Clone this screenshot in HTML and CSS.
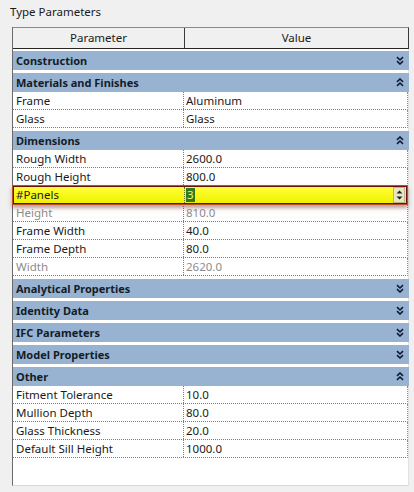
FILE: index.html
```html
<!DOCTYPE html>
<html>
<head>
<meta charset="utf-8">
<link rel="stylesheet" href="styles.css">
</head>
<body>
<div class="panel">
  <div class="title">Type Parameters</div>
  <div class="grid">
    <div class="head"><div class="hc">Parameter</div><div class="hc">Value</div></div>

    <div class="group first"><span>Construction</span><svg class="chev" width="8" height="9" viewBox="0 0 8 9"><path d="M1 1.2 L4 4 L7 1.2 M1 5.2 L4 8 L7 5.2"/></svg></div>

    <div class="group"><span>Materials and Finishes</span><svg class="chev" width="8" height="9" viewBox="0 0 8 9"><path d="M1 3.8 L4 1 L7 3.8 M1 7.8 L4 5 L7 7.8"/></svg></div>
    <div class="row"><div class="p">Frame</div><div class="v">Aluminum</div></div>
    <div class="row"><div class="p">Glass</div><div class="v">Glass</div></div>

    <div class="group"><span>Dimensions</span><svg class="chev" width="8" height="9" viewBox="0 0 8 9"><path d="M1 3.8 L4 1 L7 3.8 M1 7.8 L4 5 L7 7.8"/></svg></div>
    <div class="row"><div class="p">Rough Width</div><div class="v">2600.0</div></div>
    <div class="row"><div class="p">Rough Height</div><div class="v">800.0</div></div>
    <div class="row sel"><div class="p">#Panels</div><div class="v"><span class="cur">3</span><span class="spin"><svg width="9" height="12" viewBox="0 0 9 12"><path d="M1.5 4.5 L4.5 1.5 L7.5 4.5 Z M1.5 7.5 L4.5 10.5 L7.5 7.5 Z"/></svg></span></div></div>
    <div class="row dim"><div class="p">Height</div><div class="v">810.0</div></div>
    <div class="row"><div class="p">Frame Width</div><div class="v">40.0</div></div>
    <div class="row"><div class="p">Frame Depth</div><div class="v">80.0</div></div>
    <div class="row dim"><div class="p">Width</div><div class="v">2620.0</div></div>

    <div class="group"><span>Analytical Properties</span><svg class="chev" width="8" height="9" viewBox="0 0 8 9"><path d="M1 1.2 L4 4 L7 1.2 M1 5.2 L4 8 L7 5.2"/></svg></div>
    <div class="group"><span>Identity Data</span><svg class="chev" width="8" height="9" viewBox="0 0 8 9"><path d="M1 1.2 L4 4 L7 1.2 M1 5.2 L4 8 L7 5.2"/></svg></div>
    <div class="group"><span>IFC Parameters</span><svg class="chev" width="8" height="9" viewBox="0 0 8 9"><path d="M1 1.2 L4 4 L7 1.2 M1 5.2 L4 8 L7 5.2"/></svg></div>
    <div class="group"><span>Model Properties</span><svg class="chev" width="8" height="9" viewBox="0 0 8 9"><path d="M1 1.2 L4 4 L7 1.2 M1 5.2 L4 8 L7 5.2"/></svg></div>

    <div class="group"><span>Other</span><svg class="chev" width="8" height="9" viewBox="0 0 8 9"><path d="M1 3.8 L4 1 L7 3.8 M1 7.8 L4 5 L7 7.8"/></svg></div>
    <div class="row"><div class="p">Fitment Tolerance</div><div class="v">10.0</div></div>
    <div class="row"><div class="p">Mullion Depth</div><div class="v">80.0</div></div>
    <div class="row"><div class="p">Glass Thickness</div><div class="v">20.0</div></div>
    <div class="row"><div class="p">Default Sill Height</div><div class="v">1000.0</div></div>
  </div>
</div>
</body>
</html>
```
FILE: styles.css
```css
html, body {
  margin: 0;
  padding: 0;
  background: #f0f0f0;
}
body {
  width: 414px;
  height: 492px;
  overflow: hidden;
  font-family: "Noto Sans", "Open Sans", sans-serif;
  font-size: 11.5px;
  color: #1a1a1a;
}
.panel {
  padding: 4px 0 0 10px;
}
.title {
  height: 23px;
  line-height: 16px;
}
.grid {
  margin-left: 2px;
  width: 397px;
  height: 459px;
  background: #fff;
  border-left: 1px solid #6a6a6a;
  border-right: 1px solid #e2e2e2;
  border-bottom: 1px solid #d8d8d8;
  box-sizing: border-box;
  display: flex;
  flex-direction: column;
}
.head {
  display: grid;
  grid-template-columns: 172px 1fr;
  height: 22px;
  width: 396px;
  box-sizing: border-box;
  border-top: 1px solid #8a8a8a;
  border-bottom: 1px solid #262626;
  border-right: 1px solid #3a3a3a;
  background: #f0f0f0;
}
.hc {
  text-align: center;
  line-height: 20px;
}
.hc:first-child {
  border-right: 1px solid #3a3a3a;
}
.group {
  margin-top: 3px;
  height: 19px;
  width: 396px;
  background: #97b3d1;
  font-weight: bold;
  font-size: 11px;
  display: flex;
  align-items: center;
  justify-content: space-between;
  padding: 0 5px 0 3px;
  box-sizing: border-box;
  color: #141c28;
}
.group.first {
  margin-top: 2px;
}
.chev path {
  fill: none;
  stroke: #0e1a33;
  stroke-width: 1.6;
}
.row {
  display: grid;
  grid-template-columns: 171px 1fr;
  height: 18px;
  box-sizing: border-box;
  border-bottom: 1px dotted #7c7c7c;
  border-right: 1px dotted #8c8c8c;
  line-height: 17px;
}
.p {
  padding-left: 3px;
  border-right: 1px dotted #7c7c7c;
  white-space: nowrap;
}
.v {
  padding-left: 2px;
  white-space: nowrap;
}
.dim {
  color: #8c8c8c;
}
.sel {
  position: relative;
  z-index: 1;
  width: 394px;
  background: linear-gradient(#ffff38, #f0f000);
  border: 1px solid #6e1206;
  outline: 1px solid #b8502e;
  box-shadow: 0 3px 4px 1px rgba(120, 60, 50, 0.5);
  line-height: 16px;
}
.sel .p {
  padding-left: 2px;
  border-right-color: #6d6d20;
}
.sel .v {
  display: flex;
  align-items: center;
  justify-content: space-between;
  padding-left: 1px;
  padding-right: 1px;
}
.cur {
  background: #2f7a1c;
  color: #f2f27a;
  padding: 0 1px;
  line-height: 14px;
}
.spin {
  display: flex;
  align-items: center;
  justify-content: center;
  width: 10px;
  height: 14px;
  background: #e9e6c4;
  border: 1px solid #b8b48c;
}
.spin path {
  fill: #202020;
}
```
